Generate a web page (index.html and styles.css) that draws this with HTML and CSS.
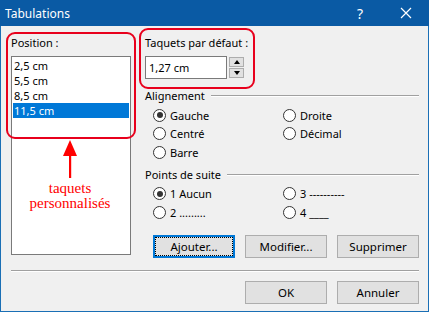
FILE: index.html
```html
<!DOCTYPE html>
<html lang="fr">

<head>
    <meta charset="UTF-8">
    <meta name="viewport" content="width=device-width, initial-scale=1.0">
    <title>Tabulations</title>
    <link rel="stylesheet" href="styles.css">
</head>

<body>
    <div class="dialog">
        <div class="titlebar">
            <span class="title">Tabulations</span>
            <span class="help">?</span>
            <span class="close">
                <svg width="12" height="12" viewBox="0 0 12 12">
                    <path d="M1 1 L11 11 M11 1 L1 11" stroke="#fff" stroke-width="1.2" fill="none" />
                </svg>
            </span>
        </div>

        <div class="content">
            <div class="top">
                <div class="col-left">
                    <div class="label">Position :</div>
                    <ul class="list">
                        <li>2,5 cm</li>
                        <li>5,5 cm</li>
                        <li>8,5 cm</li>
                        <li class="selected">11,5 cm</li>
                    </ul>
                </div>

                <div class="col-right">
                    <div class="label">Taquets par défaut :</div>
                    <div class="spin">
                        <div class="spin-input">1,27 cm</div>
                        <div class="spin-btns">
                            <span class="spin-btn"><i class="tri up"></i></span>
                            <span class="spin-btn"><i class="tri down"></i></span>
                        </div>
                    </div>

                    <div class="group">
                        <div class="group-head"><span>Alignement</span><span class="rule"></span></div>
                        <div class="radios">
                            <label class="radio checked"><span class="dot"></span>Gauche</label>
                            <label class="radio"><span class="dot"></span>Droite</label>
                            <label class="radio"><span class="dot"></span>Centré</label>
                            <label class="radio"><span class="dot"></span>Décimal</label>
                            <label class="radio"><span class="dot"></span>Barre</label>
                        </div>
                    </div>

                    <div class="group group-leader">
                        <div class="group-head"><span>Points de suite</span><span class="rule"></span></div>
                        <div class="radios">
                            <label class="radio checked"><span class="dot"></span>1 Aucun</label>
                            <label class="radio"><span class="dot"></span>3 ----------</label>
                            <label class="radio"><span class="dot"></span>2 .........</label>
                            <label class="radio"><span class="dot"></span>4 ____</label>
                        </div>
                    </div>

                    <div class="actions">
                        <button class="btn focus">Ajouter...</button>
                        <button class="btn">Modifier...</button>
                        <button class="btn">Supprimer</button>
                    </div>
                </div>
            </div>

            <div class="sep"></div>

            <div class="footer">
                <button class="btn">OK</button>
                <button class="btn">Annuler</button>
            </div>
        </div>

        <!-- annotations rouges -->
        <div class="mark mark-position"></div>
        <div class="mark mark-default"></div>
        <div class="note">
            <svg width="16" height="38" viewBox="0 0 16 38">
                <path d="M8 0 L15 16 L1 16 Z" fill="#f00" />
                <rect x="7" y="14" width="2.2" height="24" fill="#f00" />
            </svg>
            <span>taquets<br>personnalisés</span>
        </div>
    </div>
</body>

</html>
```

FILE: styles.css
```css
* {
    margin: 0;
    padding: 0;
    box-sizing: border-box;
}

body {
    width: 429px;
    height: 312px;
    font-family: "Noto Sans", "Open Sans", sans-serif;
    font-size: 11px;
    color: #000;
    background: #f0f0f0;
}

.dialog {
    position: relative;
    width: 429px;
    height: 312px;
    border: 1px solid #1a6fb5;
    border-top: none;
    background: #f0f0f0;
}

.titlebar {
    height: 26px;
    margin: 0 -1px;
    display: flex;
    align-items: center;
    background: #0a5aa4;
    color: #fff;
    padding-left: 5px;
    font-size: 12px;
}

.title {
    flex: 1;
}

.help {
    width: 46px;
    text-align: center;
    font-size: 14px;
}

.close {
    width: 46px;
    display: flex;
    justify-content: center;
}

.content {
    padding: 9px 9px 0 10px;
}

.top {
    display: grid;
    grid-template-columns: 120px 1fr;
    column-gap: 14px;
}

.label {
    height: 16px;
    line-height: 16px;
    margin-bottom: 5px;
}

.list {
    list-style: none;
    height: 199px;
    background: #fff;
    border: 1px solid #7a7a7a;
    padding: 1px;
}

.list li {
    height: 15px;
    line-height: 15px;
    padding-left: 1px;
}

.list .selected {
    background: #0078d7;
    color: #fff;
}

.spin {
    display: flex;
    gap: 2px;
    height: 23px;
}

.spin-input {
    width: 82px;
    height: 23px;
    line-height: 21px;
    border: 1px solid #7a7a7a;
    background: #fff;
    padding-left: 3px;
}

.spin-btns {
    display: flex;
    flex-direction: column;
    justify-content: space-between;
    padding: 1px 0;
}

.spin-btn {
    width: 15px;
    height: 10px;
    background: #e1e1e1;
    border: 1px solid #adadad;
    display: flex;
    align-items: center;
    justify-content: center;
}

.tri {
    width: 0;
    height: 0;
    border-left: 3.5px solid transparent;
    border-right: 3.5px solid transparent;
}

.tri.up {
    border-bottom: 4px solid #000;
}

.tri.down {
    border-top: 4px solid #000;
}

.group {
    margin-top: 9px;
}

.group-leader {
    margin-top: 5px;
}

.group-head {
    display: flex;
    align-items: center;
    height: 16px;
    line-height: 16px;
}

.rule {
    flex: 1;
    margin-left: 6px;
    height: 2px;
    border-top: 1px solid #a0a0a0;
    border-bottom: 1px solid #fff;
}

.radios {
    display: grid;
    grid-template-columns: 130px 1fr;
    grid-auto-rows: 18.5px;
    padding-left: 8px;
    margin-top: 2px;
}

.radio {
    display: flex;
    align-items: center;
    gap: 4px;
}

.dot {
    width: 13px;
    height: 13px;
    border: 1px solid #333;
    border-radius: 50%;
    background: #fff;
    display: flex;
    align-items: center;
    justify-content: center;
}

.radio.checked .dot::after {
    content: "";
    width: 6px;
    height: 6px;
    border-radius: 50%;
    background: #333;
}

.actions {
    display: flex;
    justify-content: flex-end;
    gap: 10px;
    margin-top: 13px;
}

.btn {
    width: 82px;
    height: 23px;
    font-family: inherit;
    font-size: 11.5px;
    background: #e1e1e1;
    border: 1px solid #adadad;
    color: #000;
}

.btn.focus {
    border-color: #0078d7;
    box-shadow: inset 0 0 0 1px #0078d7;
    outline: 1px dotted #000;
    outline-offset: -3px;
}

.sep {
    margin-top: 12px;
    height: 2px;
    border-top: 1px solid #a0a0a0;
    border-bottom: 1px solid #fff;
}

.footer {
    display: flex;
    justify-content: flex-end;
    gap: 10px;
    margin-top: 9px;
}

/* annotations */
.mark {
    position: absolute;
    border: 2px solid #e8001c;
    border-radius: 9px;
}

.mark-position {
    left: 5px;
    top: 32px;
    width: 130px;
    height: 107px;
}

.mark-default {
    left: 138px;
    top: 28px;
    width: 116px;
    height: 61px;
}

.note {
    position: absolute;
    left: 19px;
    top: 140px;
    width: 100px;
    display: flex;
    flex-direction: column;
    align-items: center;
    color: #f00;
    font-family: "Liberation Serif", serif;
    font-size: 15px;
    line-height: 15px;
    text-align: center;
}

.note span {
    margin-top: 3px;
}
```
